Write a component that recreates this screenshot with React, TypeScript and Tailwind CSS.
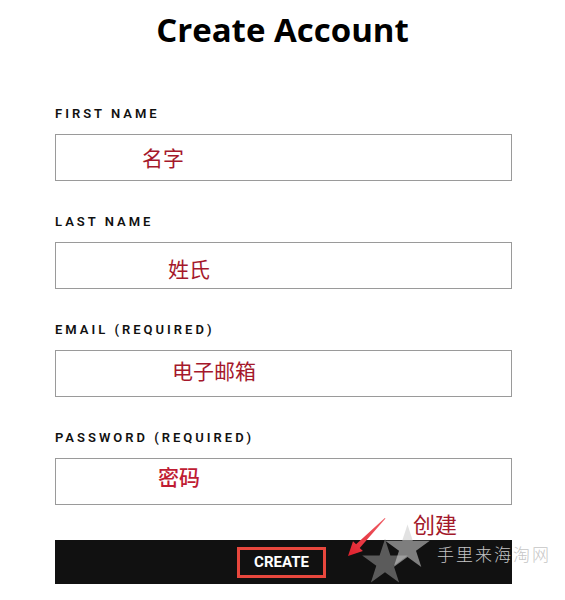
import React from "react";

interface Field {
  id: string;
  label: string;
  hint: string;
  type: string;
  hintClass: string;
}

const fields: Field[] = [
  {
    id: "first",
    label: "FIRST NAME",
    hint: "名字",
    type: "text",
    hintClass: "pl-[86px] pb-[1px] placeholder:text-[#a5182b]"
  },
  {
    id: "last",
    label: "LAST NAME",
    hint: "姓氏",
    type: "text",
    hintClass: "pl-[112px] pt-[5px] placeholder:text-[#a5182b]"
  },
  {
    id: "email",
    label: "EMAIL (REQUIRED)",
    hint: "电子邮箱",
    type: "email",
    hintClass: "pl-[116px] pb-[8px] placeholder:text-[#a5182b]"
  },
  {
    id: "password",
    label: "PASSWORD (REQUIRED)",
    hint: "密码",
    type: "text",
    hintClass: "pl-[102px] pb-[11px] placeholder:font-medium placeholder:text-[#bf1c33]"
  }
];

function starPoints(cx: number, cy: number, r: number): string {
  const inner = r * 0.382;
  const pts: string[] = [];
  for (let i = 0; i < 10; i++) {
    const rad = i % 2 === 0 ? r : inner;
    const a = (Math.PI / 5) * i - Math.PI / 2;
    pts.push(`${(cx + rad * Math.cos(a)).toFixed(1)},${(cy + rad * Math.sin(a)).toFixed(1)}`);
  }
  return pts.join(" ");
}

export default function App(): React.JSX.Element {
  return (
    <div className="min-h-[600px] w-[565px] bg-white font-['Roboto','Liberation_Sans',sans-serif]">
      <h1 className="pt-[10px] text-center font-['Open_Sans','Liberation_Sans',sans-serif] text-[33px] font-bold leading-[40px] text-black">
        Create Account
      </h1>

      <form className="ml-[55px] mt-[58px] flex w-[457px] flex-col gap-[35px]">
        {fields.map((f) => (
          <div key={f.id} className="flex flex-col">
            <label
              htmlFor={f.id}
              className="mb-[14px] h-[12px] text-[13px] font-semibold leading-[12px] tracking-[3px] text-[#111]"
            >
              {f.label}
            </label>
            <input
              id={f.id}
              type={f.type}
              placeholder={f.hint}
              className={`h-[47px] w-full border border-[#9a9a9a] bg-white font-['Noto_Sans_CJK_SC',sans-serif] text-[21px] outline-none ${f.hintClass}`}
            />
          </div>
        ))}

        <div className="relative flex h-[44px] items-center justify-center bg-[#111]">
          <button
            type="button"
            className="mr-[4px] h-[31px] border-[3px] border-[#e8473d] px-[14px] text-[15px] font-bold leading-none text-white"
          >
            CREATE
          </button>

          {/* annotation overlay */}
          <svg
            className="pointer-events-none absolute left-[285px] top-[-27px]"
            width="55"
            height="50"
            viewBox="0 0 55 50"
          >
            <defs>
              <linearGradient id="arrowFill" x1="1" y1="0" x2="0" y2="1">
                <stop offset="0" stopColor="#f06068" />
                <stop offset="1" stopColor="#e0202c" />
              </linearGradient>
            </defs>
            <polygon
              points="45.5,5.5 19.7,34.9 22.9,38.1 8,43 13,28.2 16.1,31.3 44.8,5"
              fill="url(#arrowFill)"
            />
          </svg>

          <svg
            className="pointer-events-none absolute left-[300px] top-[-24px]"
            width="90"
            height="75"
            viewBox="0 0 90 75"
          >
            <polygon points={starPoints(30, 47, 24)} fill="rgba(105,105,105,0.85)" />
            <polygon points={starPoints(52.5, 32, 23.5)} fill="rgba(205,205,205,0.58)" />
          </svg>

          <span className="pointer-events-none absolute left-[358px] top-[-28px] whitespace-nowrap font-['Noto_Sans_CJK_SC',sans-serif] text-[22px] leading-[22px] text-[#a3192b]">
            创建
          </span>
          <span className="pointer-events-none absolute left-[382px] top-[5px] whitespace-nowrap font-['Noto_Sans_CJK_SC',sans-serif] text-[17px] font-light leading-[18px] tracking-[2px] text-[#c6c6c6]">
            手里来海淘网
          </span>
        </div>
      </form>
    </div>
  );
}
